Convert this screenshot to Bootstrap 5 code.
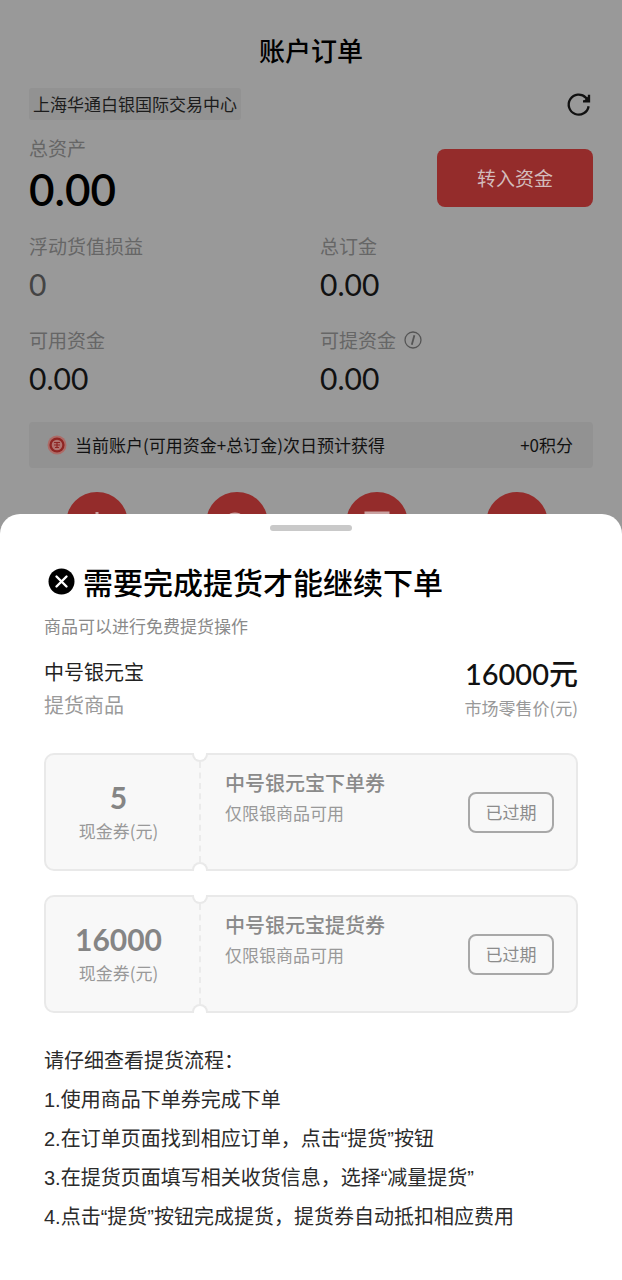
<!DOCTYPE html>
<html lang="zh-CN">
<head>
<meta charset="utf-8">
<meta name="viewport" content="width=device-width, initial-scale=1">
<title>账户订单</title>
<link href="https://cdn.jsdelivr.net/npm/bootstrap@5.3.0/dist/css/bootstrap.min.css" rel="stylesheet">
<style>
  body { font-family: "Noto Sans CJK SC", sans-serif; background: #999; color: #000; line-height: 1.5; }
  .page-title { font-size: 26px; line-height: 36px; font-weight: 500; }
  .account { padding: 32px 29px 0; }
  .venue { background: #929292; font-size: 17px; line-height: 32px; padding: 0 4px; color: #1c1c1c; border-radius: 3px; }
  .caption { font-size: 19px; line-height: 28px; color: #666; }
  .total, .figure, .price, .worth { font-family: Lato, "Noto Sans CJK SC", sans-serif; }
  .assets { margin-top: 14px; }
  .total { font-size: 44px; line-height: 54px; font-weight: 600; }
  .figure { font-size: 30px; line-height: 40px; margin-top: 4px; color: #111; }
  .figure-flat { color: #444; }
  .btn-fund { --bs-btn-color: #d3bcbc; --bs-btn-bg: #942c2b; --bs-btn-hover-bg: #842524; --bs-btn-hover-color: #ddd; width: 156px; height: 58px; font-size: 19px; border: 0; border-radius: 8px; margin-top: 6px; }
  .stats { --bs-gutter-x: 18px; row-gap: 22px; }
  .points { background: #929292; font-size: 17px; line-height: 46px; height: 46px; padding: 0 20px 0 18px; color: #111; border-radius: 4px; }
  .shortcuts { padding: 0 45px 0 37px; margin-top: 24px; }
  .shortcut { width: 62px; height: 62px; padding: 0; border: 0; border-radius: 50%; background: #942c2b; }
  .shortcut svg { display: block; }
  .sheet { background: #fff; border-radius: 20px 20px 0 0; margin-top: -40px; padding: 11px 44px 40px; z-index: 1; }
  .grabber { width: 82px; height: 6px; border-radius: 3px; background: #c9c9c9; }
  .sheet-title { font-size: 30px; line-height: 44px; font-weight: 500; }
  .hint { font-size: 17px; line-height: 30px; color: #8a8a8a; }
  .product { margin-top: 14px; }
  .goods { font-size: 20px; line-height: 33px; color: #222; }
  .pale { color: #9a9a9a; }
  .price { font-size: 29px; line-height: 38px; font-weight: 500; color: #111; }
  .tickets { gap: 24px; margin-top: 30px; }
  .ticket { background: #f8f8f8; border: 2px solid #e9e9e9; border-radius: 10px; height: 118px; color: #8a8a8a; }
  .ticket::before, .ticket::after { content: ""; position: absolute; left: 146px; width: 16px; height: 9px; background: #fff; border: 2px solid #e9e9e9; }
  .ticket::before { top: -2px; border-top: 0; border-radius: 0 0 8px 8px; }
  .ticket::after { bottom: -2px; border-bottom: 0; border-radius: 8px 8px 0 0; }
  .stub { width: 155px; margin: 7px 0; border-right: 2px dashed #ebebeb; padding-right: 8px; }
  .worth { font-size: 30px; line-height: 38px; font-weight: 700; color: #858585; }
  .small-line { font-size: 17px; line-height: 30px; color: #999; }
  .coupon { padding: 0 22px 0 24px; }
  .coupon-text { padding-top: 13px; }
  .coupon-name { font-size: 20px; line-height: 30px; font-weight: 500; }
  .btn-expired { width: 86px; height: 41px; padding: 0; font-size: 17px; border: 2px solid #a8a8a8; border-radius: 8px; }
  .btn-expired:disabled { color: #8c8c8c; border-color: #a8a8a8; opacity: 1; }
  .steps { font-family: "Liberation Sans", "Noto Sans CJK SC", sans-serif; font-size: 20px; line-height: 39px; color: #2b2b2b; margin-top: 29px; }
</style>
</head>
<body class="d-flex flex-column min-vh-100">
<main class="account">
  <h1 class="page-title text-center mb-0">账户订单</h1>
  <div class="d-flex justify-content-between align-items-center mt-3 pt-1">
    <span class="venue">上海华通白银国际交易中心</span>
    <button type="button" class="btn p-0 border-0 d-flex" aria-label="刷新">
      <svg width="28" height="28" viewBox="0 0 28 28" fill="none" stroke="#111" stroke-width="2.3"><path d="M23.6 16.2A10 10 0 1 1 20.8 7.6L23 10"/><path d="M24 4.8v6.5h-6"/><path d="M24 5.5v5.8h-5.5z" fill="#111" stroke="none"/></svg>
    </button>
  </div>
  <div class="assets d-flex justify-content-between align-items-center">
    <div>
      <div class="caption">总资产</div>
      <div class="total">0.00</div>
    </div>
    <button type="button" class="btn btn-fund">转入资金</button>
  </div>
  <div class="row stats mt-3">
    <div class="col-6"><div class="caption">浮动货值损益</div><div class="figure figure-flat">0</div></div>
    <div class="col-6"><div class="caption">总订金</div><div class="figure">0.00</div></div>
    <div class="col-6"><div class="caption">可用资金</div><div class="figure">0.00</div></div>
    <div class="col-6">
      <div class="caption d-flex align-items-center gap-2">可提资金
        <svg width="18" height="18" viewBox="0 0 18 18" fill="none" stroke="#555" stroke-width="1.3"><circle cx="9" cy="9" r="8"/><path d="M10.4 4.2 7.8 13.8" stroke-width="1.8"/></svg>
      </div>
      <div class="figure">0.00</div>
    </div>
  </div>
  <div class="points d-flex align-items-center mt-4">
    <svg class="me-2" width="20" height="20" viewBox="0 0 20 20"><circle cx="10" cy="10" r="9.5" fill="#ad6b67"/><circle cx="10" cy="10" r="7.6" fill="#8e2523"/><circle cx="10" cy="10" r="5.3" fill="#b07370"/><path d="M7 7.5h6M7 10h6M8 12.5h4M10 7v6" stroke="#8e2523" stroke-width="1.2"/></svg>
    <span>当前账户(可用资金+总订金)次日预计获得</span>
    <span class="ms-auto">+0积分</span>
  </div>
  <div class="shortcuts d-flex justify-content-between">
    <button type="button" class="shortcut" aria-label="充值"><svg width="62" height="62" viewBox="0 0 62 62"><path d="M31 20v24" fill="none" stroke="#c9a3a2" stroke-width="3"/></svg></button>
    <button type="button" class="shortcut" aria-label="积分"><svg width="62" height="62" viewBox="0 0 62 62"><circle cx="29" cy="32" r="10" fill="none" stroke="#c9a3a2" stroke-width="3"/></svg></button>
    <button type="button" class="shortcut" aria-label="订单"><svg width="62" height="62" viewBox="0 0 62 62"><path d="M20 21h22v24H20z" fill="none" stroke="#c9a3a2" stroke-width="3"/></svg></button>
    <button type="button" class="shortcut" aria-label="更多"><svg width="62" height="62" viewBox="0 0 62 62"><path d="M19 28h24M19 36h24" stroke="#c9a3a2" stroke-width="3"/></svg></button>
  </div>
</main>

<section class="sheet position-relative flex-grow-1" role="dialog" aria-labelledby="sheetTitle">
  <div class="grabber mx-auto"></div>
  <div class="d-flex align-items-center gap-2 mt-4 pt-1 ps-1">
    <svg width="27" height="27" viewBox="0 0 27 27"><circle cx="13.5" cy="13.5" r="13" fill="#000"/><path d="m8.5 8.5 10 10m0-10-10 10" stroke="#fff" stroke-width="2.4" stroke-linecap="round"/></svg>
    <h2 class="sheet-title mb-0" id="sheetTitle">需要完成提货才能继续下单</h2>
  </div>
  <p class="hint mb-0 mt-2">商品可以进行免费提货操作</p>
  <div class="product d-flex justify-content-between align-items-start">
    <div class="goods">
      <div>中号银元宝</div>
      <div class="pale">提货商品</div>
    </div>
    <div class="text-end">
      <div class="price">16000元</div>
      <div class="small-line">市场零售价(元)</div>
    </div>
  </div>
  <div class="tickets d-flex flex-column">
    <article class="ticket position-relative d-flex">
      <div class="stub text-center d-flex flex-column justify-content-center flex-shrink-0">
        <div class="worth">5</div><div class="small-line">现金券(元)</div>
      </div>
      <div class="coupon d-flex flex-grow-1 justify-content-between align-items-center">
        <div class="coupon-text align-self-start">
          <div class="coupon-name">中号银元宝下单券</div><div class="small-line">仅限银商品可用</div>
        </div>
        <button type="button" class="btn btn-expired" disabled>已过期</button>
      </div>
    </article>
    <article class="ticket position-relative d-flex">
      <div class="stub text-center d-flex flex-column justify-content-center flex-shrink-0">
        <div class="worth">16000</div><div class="small-line">现金券(元)</div>
      </div>
      <div class="coupon d-flex flex-grow-1 justify-content-between align-items-center">
        <div class="coupon-text align-self-start">
          <div class="coupon-name">中号银元宝提货券</div><div class="small-line">仅限银商品可用</div>
        </div>
        <button type="button" class="btn btn-expired" disabled>已过期</button>
      </div>
    </article>
  </div>
  <div class="steps">
    <div>请仔细查看提货流程：</div>
    <div>1.使用商品下单券完成下单</div>
    <div>2.在订单页面找到相应订单，点击“提货”按钮</div>
    <div>3.在提货页面填写相关收货信息，选择“减量提货”</div>
    <div>4.点击“提货”按钮完成提货，提货券自动抵扣相应费用</div>
  </div>
</section>
<script src="https://cdn.jsdelivr.net/npm/bootstrap@5.3.0/dist/js/bootstrap.bundle.min.js"></script>
</body>
</html>
